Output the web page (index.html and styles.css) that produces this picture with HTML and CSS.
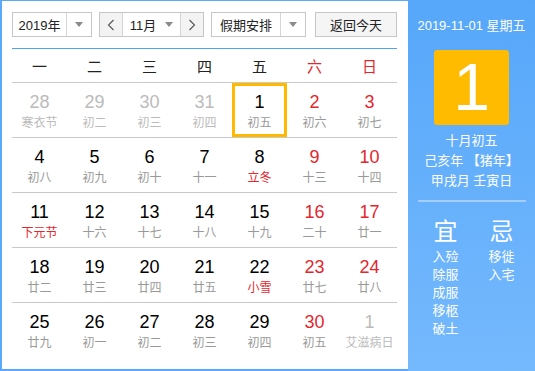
FILE: index.html
```html
<!DOCTYPE html>
<html>
<head>
    <title>万年历</title>
    <link rel="stylesheet" href="styles.css">
</head>
<body>
    <div class="calendar">
        <div class="main">
            <div class="toolbar">
                <div class="select year-select">
                    <span class="select-text">2019年</span>
                    <span class="select-arrow"><i class="caret"></i></span>
                </div>
                <div class="month-group">
                    <span class="nav-btn">
                        <svg width="8" height="12" viewBox="0 0 8 12"><polyline points="6.5,1 1.5,6 6.5,11" fill="none" stroke="#555" stroke-width="1.1"/></svg>
                    </span>
                    <span class="month-text">11月 <i class="caret"></i></span>
                    <span class="nav-btn">
                        <svg width="8" height="12" viewBox="0 0 8 12"><polyline points="1.5,1 6.5,6 1.5,11" fill="none" stroke="#555" stroke-width="1.1"/></svg>
                    </span>
                </div>
                <div class="select holiday-select">
                    <span class="select-text">假期安排</span>
                    <span class="select-arrow"><i class="caret"></i></span>
                </div>
                <div class="today-btn">返回今天</div>
            </div>

            <div class="week-head">
                <span>一</span><span>二</span><span>三</span><span>四</span><span>五</span>
                <span class="red">六</span><span class="red">日</span>
            </div>

            <div class="days">
                <div class="row">
                    <div class="day other"><b>28</b><em>寒衣节</em></div>
                    <div class="day other"><b>29</b><em>初二</em></div>
                    <div class="day other"><b>30</b><em>初三</em></div>
                    <div class="day other"><b>31</b><em>初四</em></div>
                    <div class="day today"><b>1</b><em>初五</em></div>
                    <div class="day weekend"><b>2</b><em>初六</em></div>
                    <div class="day weekend"><b>3</b><em>初七</em></div>
                </div>
                <div class="row">
                    <div class="day"><b>4</b><em>初八</em></div>
                    <div class="day"><b>5</b><em>初九</em></div>
                    <div class="day"><b>6</b><em>初十</em></div>
                    <div class="day"><b>7</b><em>十一</em></div>
                    <div class="day fest"><b>8</b><em>立冬</em></div>
                    <div class="day weekend"><b>9</b><em>十三</em></div>
                    <div class="day weekend"><b>10</b><em>十四</em></div>
                </div>
                <div class="row">
                    <div class="day fest"><b>11</b><em>下元节</em></div>
                    <div class="day"><b>12</b><em>十六</em></div>
                    <div class="day"><b>13</b><em>十七</em></div>
                    <div class="day"><b>14</b><em>十八</em></div>
                    <div class="day"><b>15</b><em>十九</em></div>
                    <div class="day weekend"><b>16</b><em>二十</em></div>
                    <div class="day weekend"><b>17</b><em>廿一</em></div>
                </div>
                <div class="row">
                    <div class="day"><b>18</b><em>廿二</em></div>
                    <div class="day"><b>19</b><em>廿三</em></div>
                    <div class="day"><b>20</b><em>廿四</em></div>
                    <div class="day"><b>21</b><em>廿五</em></div>
                    <div class="day fest"><b>22</b><em>小雪</em></div>
                    <div class="day weekend"><b>23</b><em>廿七</em></div>
                    <div class="day weekend"><b>24</b><em>廿八</em></div>
                </div>
                <div class="row">
                    <div class="day"><b>25</b><em>廿九</em></div>
                    <div class="day"><b>26</b><em>初一</em></div>
                    <div class="day"><b>27</b><em>初二</em></div>
                    <div class="day"><b>28</b><em>初三</em></div>
                    <div class="day"><b>29</b><em>初四</em></div>
                    <div class="day weekend"><b>30</b><em>初五</em></div>
                    <div class="day other"><b>1</b><em>艾滋病日</em></div>
                </div>
            </div>
        </div>

        <div class="side">
            <div class="side-date">2019-11-01 星期五</div>
            <div class="big-day">1</div>
            <div class="lunar">
                <div>十月初五</div>
                <div>己亥年 【猪年】</div>
                <div>甲戌月 壬寅日</div>
            </div>
            <div class="side-line"></div>
            <div class="yiji">
                <div class="yiji-col">
                    <div class="yiji-title">宜</div>
                    <div>入殓</div>
                    <div>除服</div>
                    <div>成服</div>
                    <div>移柩</div>
                    <div>破土</div>
                </div>
                <div class="yiji-col">
                    <div class="yiji-title">忌</div>
                    <div>移徙</div>
                    <div>入宅</div>
                </div>
            </div>
        </div>
    </div>
</body>
</html>
```

FILE: styles.css
```css
body {
    margin: 0;
    padding: 0;
    font-family: "Liberation Sans", "Noto Sans CJK SC", sans-serif;
    background-color: #fff;
}

.calendar {
    display: flex;
    width: 535px;
    height: 371px;
}

.main {
    width: 408px;
    box-sizing: border-box;
    border-left: 2px solid #5aa9fa;
    border-top: 1px solid #5aa9fa;
    border-bottom: 2px solid #5aa9fa;
    padding: 11px 11px 0 10px;
}

/* toolbar */
.toolbar {
    display: flex;
    height: 25px;
    font-size: 13px;
    color: #222;
}

.select,
.month-group,
.today-btn {
    box-sizing: border-box;
    height: 25px;
    border: 1px solid #c6c6c6;
    display: flex;
    align-items: center;
}

.year-select {
    width: 80px;
}

.select-text {
    flex: 1;
    text-align: center;
}

.select-arrow {
    width: 24px;
    height: 100%;
    border-left: 1px solid #d6d6d6;
    display: flex;
    align-items: center;
    justify-content: center;
}

.caret {
    display: inline-block;
    width: 0;
    height: 0;
    border-left: 4px solid transparent;
    border-right: 4px solid transparent;
    border-top: 5px solid #8a8a8a;
}

.month-group {
    width: 105px;
    margin-left: 7px;
}

.nav-btn {
    width: 22px;
    height: 100%;
    background-color: #f3f3f3;
    display: flex;
    align-items: center;
    justify-content: center;
}

.month-text {
    flex: 1;
    height: 100%;
    border-left: 1px solid #d6d6d6;
    border-right: 1px solid #d6d6d6;
    display: flex;
    align-items: center;
    justify-content: center;
    gap: 9px;
}

.holiday-select {
    width: 95px;
    margin-left: 7px;
}

.today-btn {
    width: 82px;
    margin-left: 9px;
    justify-content: center;
    background-color: #f5f5f5;
}

/* week header */
.week-head {
    margin-top: 11px;
    border-top: 1px solid #4ea2f6;
    border-bottom: 1px solid #c9c9c9;
    display: grid;
    grid-template-columns: repeat(7, 55px);
    height: 33px;
    align-items: center;
    font-family: "Noto Sans CJK SC", sans-serif;
    font-size: 15px;
    color: #222;
}

.week-head span {
    text-align: center;
}

.week-head .red {
    color: #e5262d;
}

/* day grid */
.row {
    display: grid;
    grid-template-columns: repeat(7, 55px);
    height: 54px;
    border-bottom: 1px solid #c9c9c9;
}

.row:last-child {
    border-bottom: none;
}

.day {
    box-sizing: border-box;
    display: flex;
    flex-direction: column;
    align-items: center;
    padding-top: 8px;
}

.day b {
    font-weight: normal;
    font-size: 18px;
    line-height: 22px;
    color: #000;
}

.day em {
    font-style: normal;
    font-family: "Noto Sans CJK SC", sans-serif;
    font-size: 12px;
    line-height: 18px;
    color: #999;
    white-space: nowrap;
}

.day.other b,
.day.other em {
    color: #bbb;
}

.day.weekend b {
    color: #e5262d;
}

.day.fest em {
    color: #e5262d;
}

.day.today {
    border: 3px solid #ffb900;
    padding-top: 5px;
    width: 55px;
}

/* side panel */
.side {
    width: 127px;
    height: 371px;
    background: linear-gradient(#56a7fa, #75b9fd);
    color: #fff;
    display: flex;
    flex-direction: column;
    align-items: center;
}

.side-date {
    margin-top: 17px;
    font-size: 13px;
    line-height: 18px;
}

.big-day {
    margin-top: 15px;
    width: 75px;
    height: 75px;
    background-color: #ffbb00;
    border-radius: 3px;
    font-size: 66px;
    line-height: 75px;
    text-align: center;
}

.lunar {
    margin-top: 6px;
    font-size: 13px;
    line-height: 20px;
    text-align: center;
}

.side-line {
    margin-top: 9px;
    width: 108px;
    height: 2px;
    background-color: #a4cffc;
}

.yiji {
    display: flex;
    gap: 30px;
    margin-top: 15px;
    margin-left: 4px;
    font-size: 13px;
    line-height: 18px;
    text-align: center;
}

.yiji-title {
    font-size: 24px;
    line-height: 30px;
    margin-bottom: 1px;
}
```
